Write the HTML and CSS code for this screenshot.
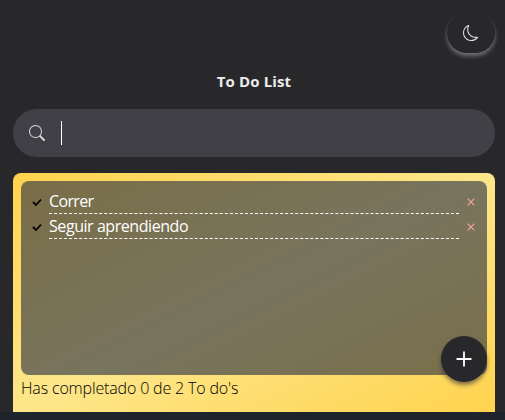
FILE: index.html
```html
<!DOCTYPE html>
<html lang="es">
<head>
<meta charset="utf-8">
<title>To Do List</title>
<link rel="stylesheet" href="styles.css">
</head>
<body>
<main class="app">
  <header class="toolbar">
    <button class="theme" aria-label="Tema">
      <svg width="16" height="16" viewBox="0 0 16 16" fill="currentColor"><path d="M6 .278a.768.768 0 0 1 .08.858 7.208 7.208 0 0 0-.878 3.46c0 4.021 3.278 7.277 7.318 7.277.527 0 1.04-.055 1.533-.16a.787.787 0 0 1 .81.316.733.733 0 0 1-.031.893A8.349 8.349 0 0 1 8.344 16C3.734 16 0 12.286 0 7.71 0 4.266 2.114 1.312 5.124.06A.752.752 0 0 1 6 .278zM4.858 1.311A7.269 7.269 0 0 0 1.025 7.71c0 4.02 3.279 7.276 7.319 7.276a7.316 7.316 0 0 0 5.205-2.162c-.337.042-.68.063-1.029.063-4.61 0-8.343-3.714-8.343-8.29 0-1.167.242-2.278.681-3.286z"/></svg>
    </button>
  </header>
  <h1 class="title"><span>To Do List</span></h1>
  <div class="search">
    <svg width="16" height="16" viewBox="0 0 16 16" fill="currentColor"><path d="M11.742 10.344a6.500 6.500 0 1 0-1.397 1.398h-.001c.03.04.062.078.098.115l3.850 3.850a1 1 0 0 0 1.415-1.414l-3.850-3.850a1.007 1.007 0 0 0-.115-.1zM12 6.500a5.500 5.500 0 1 1-11 0 5.500 5.500 0 0 1 11 0z"/></svg>
    <span class="caret"></span>
  </div>
  <section class="card">
    <ul class="list">
      <li class="item">
        <svg class="check" viewBox="0 0 10 8"><path d="M1 4l3 3 5-5.500"/></svg>
        <span class="label"><span class="text short">Correr</span></span>
        <svg class="remove" viewBox="0 0 8 8"><path d="M.7.700l6.600 6.600M7.300.700L.7 7.300"/></svg>
      </li>
      <li class="item">
        <svg class="check" viewBox="0 0 10 8"><path d="M1 4l3 3 5-5.500"/></svg>
        <span class="label"><span class="text">Seguir aprendiendo</span></span>
        <svg class="remove" viewBox="0 0 8 8"><path d="M.7.700l6.600 6.600M7.300.700L.7 7.300"/></svg>
      </li>
    </ul>
    <p class="summary"><span>Has completado 0 de 2 To do's</span></p>
    <button class="add" aria-label="Agregar">
      <svg width="16" height="16" viewBox="0 0 16 16"><path d="M8 .5v15M.5 8h15"/></svg>
    </button>
  </section>
</main>
</body>
</html>
```
FILE: styles.css
```css
* {
  box-sizing: border-box;
}

body {
  margin: 0;
  height: 420px;
  overflow: hidden;
  background: #1e242c;
  font: 16px/24px "Open Sans", "Noto Sans", sans-serif;
}

.app {
  height: 412px;
  padding: 13px 10px 0 13px;
  background: #28282a;
}

button {
  display: flex;
  align-items: center;
  justify-content: center;
  padding: 0;
  border: 0;
  border-radius: 50%;
  background: #28282a;
  color: #fff;
}

.toolbar {
  display: flex;
  justify-content: flex-end;
}

.theme {
  width: 48px;
  height: 40px;
  border-radius: 20px;
  color: #e4e4e6;
  box-shadow: 0 3px 4px #727275;
}

.title {
  height: 24px;
  margin: 16px 0 16px;
  color: #ececee;
  font-size: 15px;
  font-weight: 700;
  line-height: 24px;
  letter-spacing: 0.12px;
  text-align: center;
}

.search {
  display: flex;
  align-items: center;
  gap: 16px;
  height: 48px;
  padding: 0 16px;
  border-radius: 24px;
  background: #414046;
  color: #d8d8da;
}

.caret {
  width: 1px;
  height: 24px;
  background: #fff;
}

.card {
  position: relative;
  height: 239px;
  margin-top: 16px;
  padding: 8px;
  border-radius: 8px 8px 0 0;
  background: linear-gradient(to bottom right, #ffd34d, #fde68a 50%, #ffd34d);
}

.list {
  height: 194px;
  margin: 0;
  padding: 8px 12px 0 11px;
  border-radius: 8px;
  background: rgba(38, 46, 66, 0.62);
  list-style: none;
}

.item {
  display: flex;
  align-items: center;
  height: 25px;
}

.check {
  width: 10px;
  height: 8px;
  margin-right: 7px;
  fill: none;
  stroke: #000;
  stroke-width: 1.8;
}

.label {
  flex: 1;
  height: 25px;
  padding-top: 1px;
  line-height: 23px;
  border-bottom: 1px dashed #fff;
  color: #fff;
}

.text {
  letter-spacing: -0.44px;
}

.short {
  letter-spacing: -0.65px;
}

.remove {
  width: 8px;
  height: 8px;
  margin-left: 8px;
  fill: none;
  stroke: #f7a6a0;
  stroke-width: 1.1;
}

.summary {
  margin: 0;
  padding-top: 1px;
  color: #000;
  font-weight: 300;
  letter-spacing: -0.16px;
}

.add {
  position: absolute;
  right: 8px;
  bottom: 30px;
  width: 46px;
  height: 46px;
  box-shadow: 0 3px 4px rgba(40, 40, 60, 0.6);
}

.add svg {
  fill: none;
  stroke: currentColor;
  stroke-width: 1.8;
}
```
